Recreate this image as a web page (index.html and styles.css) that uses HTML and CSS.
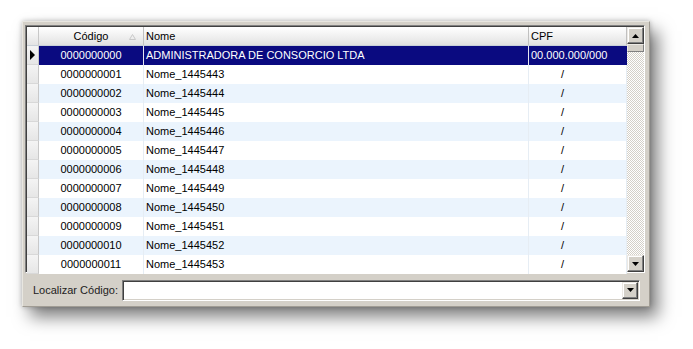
FILE: index.html
```html
<!DOCTYPE html>
<html>
<head>
<meta charset="utf-8">
<link rel="stylesheet" href="styles.css">
</head>
<body>
<div class="window">
  <div class="grid">
    <div class="table">
      <div class="row head">
        <div class="ind"></div>
        <div class="c code">Código<svg class="sort" width="7" height="6" viewBox="0 0 7 6"><path d="M3.5 0.5 L6.5 5.5 L0.5 5.5 Z" fill="none" stroke="#c8c8c8" stroke-width="1"/></svg></div>
        <div class="c name">Nome</div>
        <div class="c cpf">CPF</div>
      </div>
      <div class="row sel">
        <div class="ind"><svg width="6" height="10" viewBox="0 0 6 10"><path d="M0 0 L5 5 L0 10 Z" fill="#000"/></svg></div>
        <div class="c code">0000000000</div>
        <div class="c name">ADMINISTRADORA DE CONSORCIO LTDA</div>
        <div class="c cpf">00.000.000/000</div>
      </div>
      <div class="row"><div class="ind"></div><div class="c code">0000000001</div><div class="c name">Nome_1445443</div><div class="c cpf slash">/</div></div>
      <div class="row alt"><div class="ind"></div><div class="c code">0000000002</div><div class="c name">Nome_1445444</div><div class="c cpf slash">/</div></div>
      <div class="row"><div class="ind"></div><div class="c code">0000000003</div><div class="c name">Nome_1445445</div><div class="c cpf slash">/</div></div>
      <div class="row alt"><div class="ind"></div><div class="c code">0000000004</div><div class="c name">Nome_1445446</div><div class="c cpf slash">/</div></div>
      <div class="row"><div class="ind"></div><div class="c code">0000000005</div><div class="c name">Nome_1445447</div><div class="c cpf slash">/</div></div>
      <div class="row alt"><div class="ind"></div><div class="c code">0000000006</div><div class="c name">Nome_1445448</div><div class="c cpf slash">/</div></div>
      <div class="row"><div class="ind"></div><div class="c code">0000000007</div><div class="c name">Nome_1445449</div><div class="c cpf slash">/</div></div>
      <div class="row alt"><div class="ind"></div><div class="c code">0000000008</div><div class="c name">Nome_1445450</div><div class="c cpf slash">/</div></div>
      <div class="row"><div class="ind"></div><div class="c code">0000000009</div><div class="c name">Nome_1445451</div><div class="c cpf slash">/</div></div>
      <div class="row alt"><div class="ind"></div><div class="c code">0000000010</div><div class="c name">Nome_1445452</div><div class="c cpf slash">/</div></div>
      <div class="row"><div class="ind"></div><div class="c code">0000000011</div><div class="c name">Nome_1445453</div><div class="c cpf slash">/</div></div>
    </div>
    <div class="vscroll">
      <div class="sbtn"><svg width="7" height="4" viewBox="0 0 7 4"><path d="M3.5 0 L7 4 L0 4 Z" fill="#000"/></svg></div>
      <div class="thumb"></div>
      <div class="track"></div>
      <div class="sbtn"><svg width="7" height="4" viewBox="0 0 7 4"><path d="M0 0 L7 0 L3.5 4 Z" fill="#000"/></svg></div>
    </div>
  </div>
  <div class="search">
    <span class="label">Localizar Código:</span>
    <div class="combo">
      <div class="field"></div>
      <div class="sbtn drop"><svg width="7" height="4" viewBox="0 0 7 4"><path d="M0 0 L7 0 L3.5 4 Z" fill="#000"/></svg></div>
    </div>
  </div>
</div>
</body>
</html>
```
FILE: styles.css
```css
html, body { margin: 0; padding: 0; background: #fff; }
body {
  font-family: "Liberation Sans", Arial, sans-serif;
  font-size: 11px;
  color: #000;
  width: 693px;
  height: 349px;
  overflow: hidden;
}
.window {
  margin: 21px 0 0 22px;
  width: 628px;
  height: 286px;
  box-sizing: border-box;
  background: #d4d0c8;
  border-top: 1px solid #e8e6e0;
  border-left: 1px solid #e8e6e0;
  border-right: 1px solid #a09c94;
  border-bottom: 1px solid #a09c94;
  padding: 3px 4px 0 2px;
  box-shadow: 0 0 5px rgba(0,0,0,0.25), 8px 10px 16px rgba(0,0,0,0.5);
}
.grid {
  display: flex;
  border-top: 1px solid #808080;
  border-left: 1px solid #808080;
  border-right: 1px solid #fff;
  border-bottom: 1px solid #fff;
  height: 248px;
  box-sizing: border-box;
  background: #fff;
}
.table {
  width: 600px;
  border-top: 1px solid #404040;
  border-left: 1px solid #404040;
}
.row {
  display: grid;
  grid-template-columns: 12px 105px 385px 98px;
  height: 19px;
  line-height: 19px;
  background: #fff;
}
.row.alt { background: #ebf4fd; }
.row .c {
  white-space: nowrap;
  overflow: hidden;
  border-right: 1px solid #e6edf4;
}
.row .ind {
  background: linear-gradient(#f4f4f4, #e6e6e6);
  border-right: 1px solid #c8c8c8;
  border-bottom: 1px solid #d8d8d8;
  box-sizing: border-box;
  display: flex;
  align-items: center;
  padding-left: 3px;
}
.code { text-align: center; position: relative; }
.name { padding-left: 2px; }
.cpf { padding-left: 2px; }
.cpf.slash { padding-left: 32px; }
.head {
  height: 18px;
  line-height: 18px;
  background: linear-gradient(#ffffff, #ebebeb 70%, #e0e0e0);
  border-bottom: 1px solid #c8d0d8;
}
.head .c { border-right: 1px solid #c0c0c0; }
.head .ind { background: linear-gradient(#ffffff, #e4e4e4); border-bottom: none; }
.sort { position: absolute; right: 7px; top: 7px; }
.sel { background: #0a0a80; color: #fff; }
.sel .c { border-right: 1px solid #e6e6f0; }
.sel .cpf { border-right: none; }
.vscroll {
  width: 17px;
  display: flex;
  flex-direction: column;
  border-top: 1px solid #404040;
}
.sbtn {
  width: 17px;
  height: 17px;
  box-sizing: border-box;
  background: #d4d0c8;
  border-top: 1px solid #ece9e4;
  border-left: 1px solid #ece9e4;
  border-right: 1px solid #404040;
  border-bottom: 1px solid #404040;
  box-shadow: inset -1px -1px 0 #808080, inset 1px 1px 0 #fff;
  display: flex;
  align-items: center;
  justify-content: center;
  flex: none;
}
.thumb {
  height: 8px;
  box-sizing: border-box;
  background: #d4d0c8;
  border-top: 1px solid #ece9e4;
  border-left: 1px solid #ece9e4;
  border-right: 1px solid #808080;
  border-bottom: 1px solid #808080;
  flex: none;
}
.track {
  flex: 1;
  background: repeating-conic-gradient(#d4d0c8 0 25%, #ffffff 0 50%) 0 0 / 2px 2px;
}
.search {
  display: flex;
  align-items: center;
  height: 34px;
  padding-left: 8px;
}
.label {
  width: 89px;
  flex: none;
  color: #222;
}
.combo {
  display: flex;
  width: 518px;
  height: 21px;
  box-sizing: border-box;
  background: #fff;
  border-top: 1px solid #808080;
  border-left: 1px solid #808080;
  border-right: 1px solid #fff;
  border-bottom: 1px solid #fff;
  box-shadow: inset 1px 1px 0 #404040, inset -1px -1px 0 #d4d0c8;
  padding: 1px 1px 1px 1px;
}
.field { flex: 1; }
.drop { width: 16px; height: 17px; }
```
